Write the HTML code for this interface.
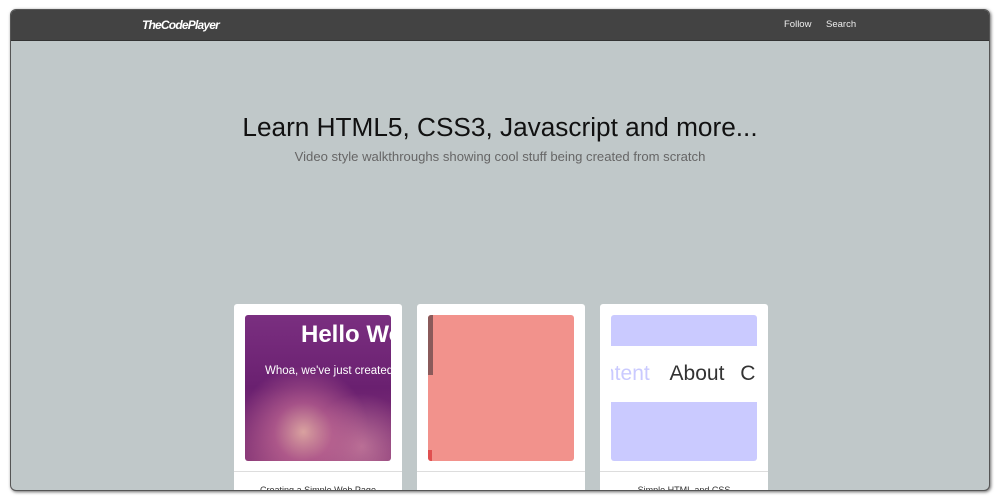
<!DOCTYPE html>
<html><head><style>
*{margin:0;padding:0;box-sizing:border-box}
body{width:1000px;height:500px;background:#fff;position:relative;overflow:hidden;font-family:"Liberation Sans",sans-serif}
.win{position:absolute;left:10px;top:9px;width:980px;height:482px;border-radius:6px;overflow:hidden;background:#c0c8c9;border:1px solid #555;box-shadow:1px 1px 3px rgba(0,0,0,.6)}
.hd{position:absolute;left:0;top:0;width:100%;height:31px;background:#434343;border-bottom:1px solid #333}
.logo{position:absolute;left:131px;top:8px;color:#fff;font-weight:bold;font-style:italic;font-size:12px;letter-spacing:-0.8px}
.nav{position:absolute;top:9px;color:#eee;font-size:9.5px}
h1{position:absolute;left:0;width:100%;top:102px;text-align:center;font-weight:normal;font-size:26.2px;color:#111}
.sub{position:absolute;left:0;width:100%;top:139px;text-align:center;font-size:13.1px;color:#666}
.card{position:absolute;top:294px;width:168px;height:200px;background:#fff;border-radius:3px}
.img{position:absolute;left:11px;top:11px;width:146px;height:146px;border-radius:3px;overflow:hidden}
.line{position:absolute;left:0;top:167px;width:100%;height:1px;background:#ddd}
.cap{position:absolute;left:0;width:100%;top:181px;text-align:center;font-size:9px;color:#333}
</style></head><body>
<div class="win">
<div class="hd"><div class="logo">TheCodePlayer</div><div class="nav" style="left:773px">Follow</div><div class="nav" style="left:815px">Search</div></div>
<h1>Learn HTML5, CSS3, Javascript and more...</h1>
<div class="sub">Video style walkthroughs showing cool stuff being created from scratch</div>
<div class="card" style="left:223px"><div class="img" style="background:radial-gradient(circle at 40% 80%,rgba(240,190,170,.8) 0,rgba(200,110,150,.6) 20%,transparent 45%),radial-gradient(circle at 80% 90%,rgba(220,150,170,.6) 0,transparent 30%),linear-gradient(#7a2f80,#6a2070 50%,#8a3a78)">
<div style="position:absolute;left:56px;top:6px;color:#fff;font-weight:bold;font-size:24px;white-space:nowrap">Hello World</div>
<div style="position:absolute;left:20px;top:50px;color:#fff;font-size:11.5px;white-space:nowrap">Whoa, we've just created</div></div>
<div class="line"></div><div class="cap">Creating a Simple Web Page</div></div>
<div class="card" style="left:406px"><div class="img" style="background:#f2928c"><div style="position:absolute;left:0;top:0;width:5px;height:60px;background:#8a5a5a"></div><div style="position:absolute;left:0;top:135px;width:4px;height:30px;background:#e05050"></div></div>
<div class="line"></div><div class="cap"></div></div>
<div class="card" style="left:589px"><div class="img" style="background:#fff"><div style="position:absolute;left:0;top:0;width:146px;height:31px;background:#cacaff"></div>
<div style="position:absolute;left:-8px;top:47px;font-size:21px;color:#cacaff;white-space:nowrap">ntent <span style="color:#333;margin-left:14px">About</span> <span style="color:#333;margin-left:10px">C</span></div>
<div style="position:absolute;left:0;top:87px;width:146px;height:59px;background:#cacaff"></div></div>
<div class="line"></div><div class="cap">Simple HTML and CSS</div></div>
</div>
</body></html>
